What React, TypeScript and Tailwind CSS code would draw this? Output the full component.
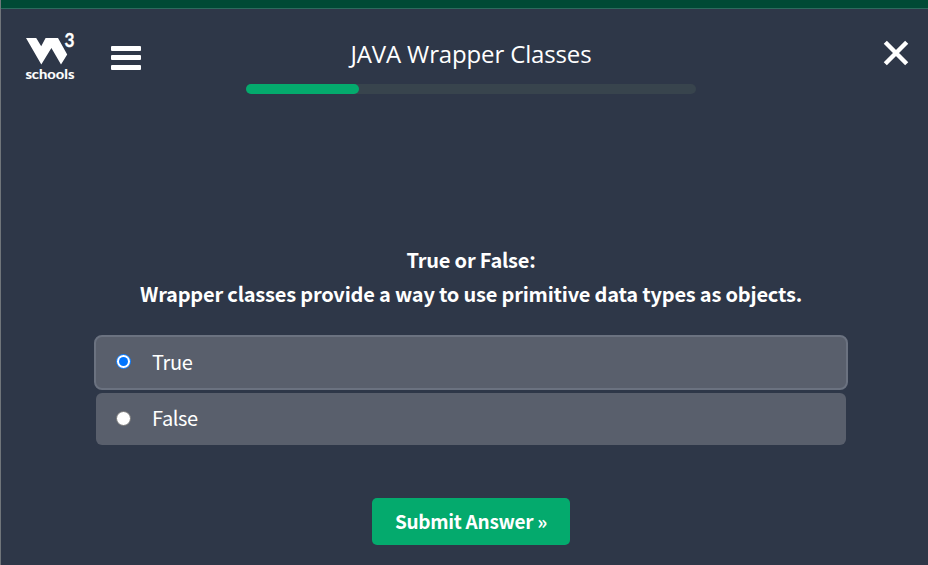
import { useState } from "react";

const sourceFont = "font-['Noto_Sans_CJK_SC','Noto_Sans',sans-serif]";

function Logo() {
  return (
    <svg className="block h-[60px] w-[56px]" viewBox="0 -6 56 60" role="img" aria-label="W3Schools">
      <path d="M2 6H12.2L17.2 14.3L21.6 6H34L43.2 22.4L37 32.4L27.4 16L17.3 32.4Z" fill="#fff" />
      <text x="40.6" y="15.2" fill="#fff" fontSize="18" fontWeight="700" stroke="#fff" strokeWidth="0.3" textLength="10" lengthAdjust="spacingAndGlyphs" className="font-['Lato',sans-serif]">3</text>
      <text x="1.4" y="47" fill="#fff" fontSize="14" fontWeight="700" stroke="#fff" strokeWidth="0.15" textLength="49" lengthAdjust="spacingAndGlyphs" className="font-['Lato',sans-serif]">schools</text>
    </svg>
  );
}

function Option({ label, selected, onSelect }: { label: string; selected: boolean; onSelect: () => void }) {
  return (
    <button
      onClick={onSelect}
      className={
        selected
          ? "flex h-[55px] w-[754px] items-center rounded-lg border-2 border-[#6b7280] bg-[#595f6c] pl-5 text-left"
          : "mx-[2px] mt-[3px] flex h-[52px] w-[750px] items-center rounded-md bg-[#595f6c] pl-5 text-left"
      }
    >
      <span
        className={
          selected
            ? "mb-[3px] flex size-[15px] items-center justify-center rounded-full border-[1.5px] border-[#0075ff] bg-white"
            : "mb-[2px] size-[15px] rounded-full border border-[#767676] bg-white"
        }
      >
        {selected && <span className="size-[9px] rounded-full bg-[#0075ff]" />}
      </span>
      <span className={`${selected ? "mb-px" : "mb-[2px]"} ml-[21px] text-[20px] leading-[30px] tracking-[-0.4px] text-white ${sourceFont}`}>{label}</span>
    </button>
  );
}

export default function App() {
  const [answer, setAnswer] = useState("True");
  return (
    <div className="flex h-[565px] w-[928px] flex-col overflow-hidden border-l border-[#70757a] bg-[#2e3748] text-white">
      <div className="h-[9px] shrink-0 border-b border-[#2d6b5e] bg-[#004a35]" />
      <header className="flex h-[91px] shrink-0 items-start">
        <div className="ml-[23px] mt-[17px]">
          <Logo />
        </div>
        <button aria-label="Menu" className="ml-[31px] mt-[36.7px] flex w-[30px] flex-col gap-[4.7px]">
          <span className="h-[5px] w-full rounded-[1px] bg-white" />
          <span className="h-[5px] w-full rounded-[1px] bg-white" />
          <span className="h-[5px] w-full rounded-[1px] bg-white" />
        </button>
        <div className="ml-[105px] flex w-[450px] flex-col items-center pt-[27px]">
          <h1 className="whitespace-nowrap font-['Open_Sans','Noto_Sans',sans-serif] text-[24px] leading-[36px] tracking-[-0.14px]">JAVA Wrapper Classes</h1>
          <div className="mt-[12px] h-[10px] w-[450px] rounded-full bg-[#38444d]">
            <div className="h-full w-1/4 rounded-full bg-[#04aa6d]" />
          </div>
        </div>
        <button aria-label="Close" className="ml-[187px] mt-[31px]">
          <svg className="block size-[26px]" viewBox="0 0 26 26">
            <path d="M2.3 2.3L23.7 23.7M23.7 2.3L2.3 23.7" stroke="#fff" strokeWidth="4.4" />
          </svg>
        </button>
      </header>
      <main className={`flex w-[940px] flex-col items-center pt-[143px] ${sourceFont}`}>
        <p className="whitespace-nowrap text-center text-[20px] font-bold leading-[34px] tracking-[-0.2px]">
          True or False:
          <br />
          Wrapper classes provide a way to use primitive data types as objects.
        </p>
        <div className="mt-[24px] flex flex-col">
          <Option label="True" selected={answer === "True"} onSelect={() => setAnswer("True")} />
          <Option label="False" selected={answer === "False"} onSelect={() => setAnswer("False")} />
        </div>
        <button className="mt-[53px] h-[47px] w-[198px] rounded-[5px] bg-[#04aa6d] pb-px text-[19px] font-bold leading-[30px] tracking-[-0.27px]">
          Submit Answer »
        </button>
      </main>
    </div>
  );
}
